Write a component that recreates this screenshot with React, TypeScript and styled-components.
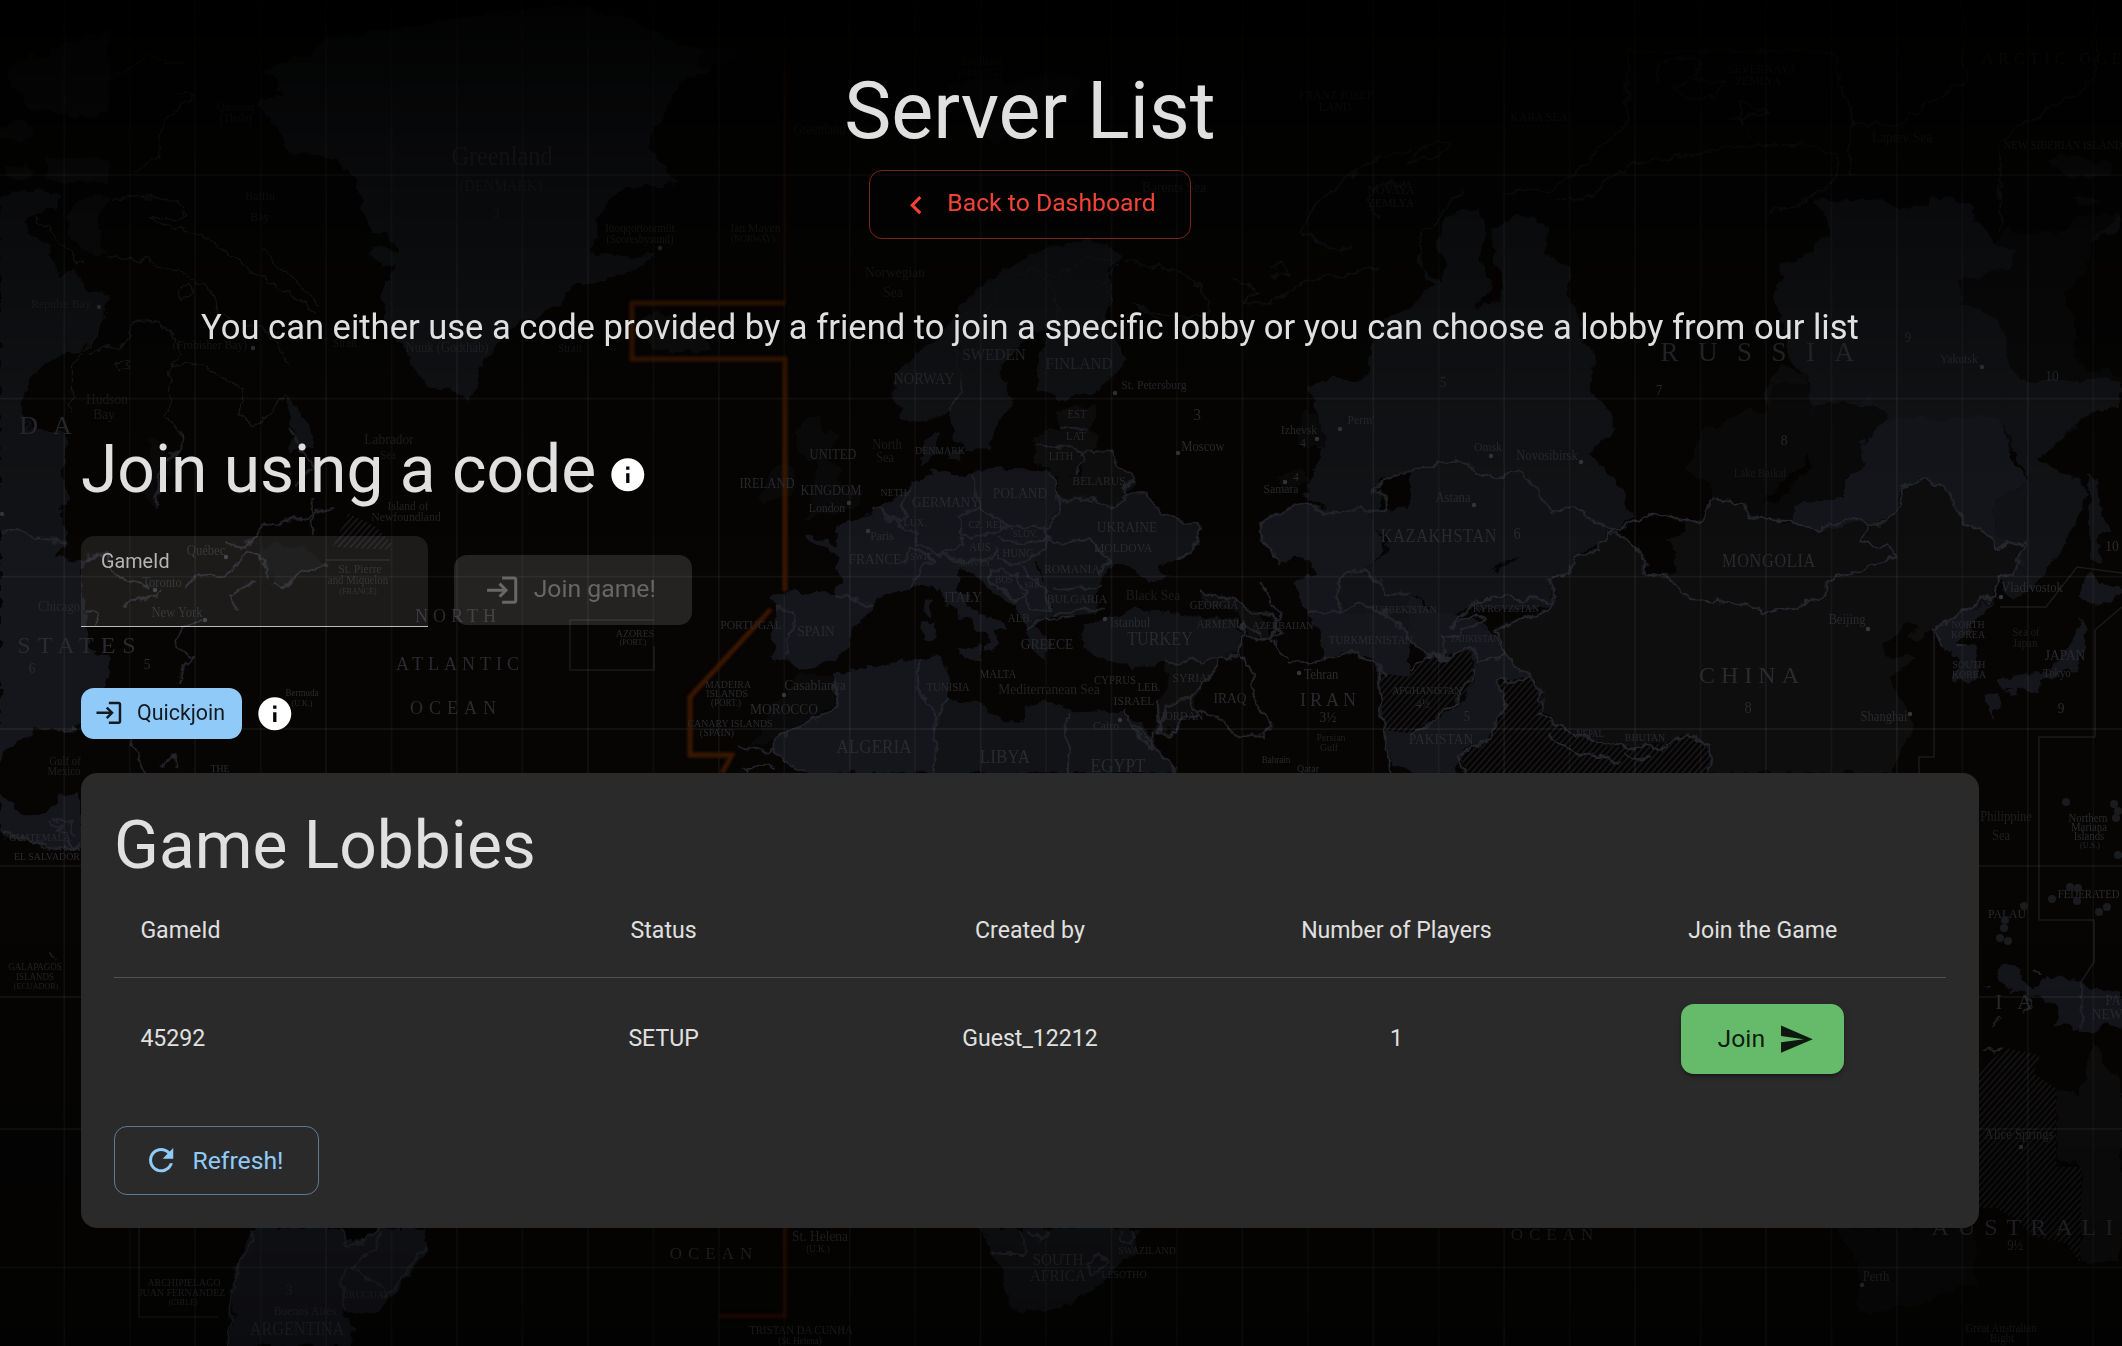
import React from "react";
import styled, { createGlobalStyle, css } from "styled-components";

const GlobalStyle = createGlobalStyle`
  *, *::before, *::after { box-sizing: border-box; }
  html, body { margin: 0; padding: 0; background: #050403; }
  body { font-family: Roboto, "Liberation Sans", sans-serif; color: #e0e0e0; overflow: hidden; }
`;

/* ---------- World map backdrop ---------- */

type Tone = "plum" | "slate" | "ash" | "coal" | "sea";
type Shape = [Tone, string];
interface Sheet {
  matrix: string;
  land: Shape[];
  hatched?: string[];
  borders?: string[];
}

const tones: Record<Tone, string> = {
  plum: "#15161c",
  slate: "#121316",
  ash: "#0e0e0f",
  coal: "#0a0a0a",
  sea: "#050403",
};

const sheets: Sheet[] = [
  {
    // Greenland, Canadian archipelago
    matrix: "matrix(.45281 0 0 .33333 0 0)",
    land: [
      ["slate", "M580 215L640 180L700 150L720 110L830 95L900 80L1000 60L1130 25L1260 20L1360 45L1440 90L1500 130L1568 160L1568 210L1500 250L1480 310L1445 380L1440 450L1470 510L1500 540L1460 565L1395 555L1345 590L1322 660L1312 760L1380 770L1450 768L1370 830L1265 860L1235 910L1190 950L1120 990L1085 1060L1060 1100L1055 1160L1030 1200L990 1170L940 1160L905 1090L880 1020L850 940L840 880L860 820L890 760L860 710L810 680L805 610L780 540L745 485L700 462L640 458L610 390L570 310L620 280L615 240Z"],
      ["slate", "M818 760L850 735L895 760L875 795L840 805Z"],
      ["ash", "M0 380L40 370L80 390L60 420L0 410ZM10 500L60 490L75 530L40 550L10 535ZM100 480L180 470L240 480L240 545L160 550L100 530ZM110 150L170 120L240 95L240 330L200 350L140 350L60 310L20 260L20 200L60 165L110 180Z"],
      ["slate", "M0 590L60 570L135 580L120 630L70 645L60 690L110 740L130 830L170 800L190 870L240 880L235 940L210 1000L175 1050L110 1080L70 1130L50 1200L60 1280L100 1310L140 1350L0 1350Z"],
      ["ash", "M150 640L190 590L240 585L215 660L225 740L240 770L190 755L155 710Z"],
      ["slate", "M630 1180L660 1230L690 1300L695 1350L640 1350L650 1300Z"],
      ["ash", "M1415 960L1450 935L1500 960L1568 950L1568 1050L1500 1060L1440 1040Z"],
    ],
    borders: [
      "M245 600L330 590L400 610L410 650L330 650L380 680L450 700L500 760L570 830L640 880L700 940",
      "M240 770L330 780L430 840L480 900L480 950L560 970L610 1020L635 1100M200 1050L270 1040L300 960L370 980L400 1060L370 1120L380 1200L360 1250L400 1300L400 1350",
      "M380 1100L440 1090L500 1140L540 1170L530 1240L560 1280L610 1230L630 1180",
      "M160 1240L160 1090L240 940M75 650L190 800M575 740L710 920",
      "M240 240L330 170L400 190M380 290L430 280L360 370L350 470L300 510",
      "M390 870L420 850L425 885L400 895ZM260 1090L290 1080L285 1105L265 1110Z",
    ],
  },
  {
    // Scandinavia and western Russia
    matrix: "matrix(.45281 0 0 .33333 700 0)",
    land: [
      ["slate", "M430 1120L500 1040L560 960L600 880L650 830L700 780L780 740L860 715L930 760L900 810L910 880L890 950L920 1020L940 1080L880 1170L790 1200L745 1170L745 1060L790 1000L740 990L700 1050L665 1110L690 1200L650 1280L640 1340L600 1350L560 1320L550 1240L500 1270L450 1260L430 1190Z"],
      ["slate", "M1568 920L1520 950L1480 1040L1475 1130L1410 1150L1335 1165L1370 1215L1360 1350L1568 1350Z"],
      ["coal", "M540 260L620 230L700 250L780 210L850 240L810 310L740 330L690 400L650 440L620 360L560 320Z"],
      ["coal", "M0 130L100 150L50 190L0 200Z"],
    ],
    borders: [
      "M930 780L1040 810L1110 860L1130 930L1080 960L1000 940L950 910L1010 960M1180 840L1230 870L1200 910L1280 900L1340 840L1440 820L1500 800",
      "M1568 450L1480 480L1420 540L1350 620L1330 700L1370 735L1440 740M1260 800L1290 790L1300 820L1270 830Z",
      "M550 1240L575 1150L565 1040L640 920L660 840L740 810L780 870L790 950L820 1000M740 810L800 830L850 770L920 790L885 850L910 900L885 960L940 1080",
      "M1568 560L1500 550L1470 600L1500 650",
    ],
  },
  {
    // Siberia
    matrix: "matrix(.45407 0 0 .33333 1410 0)",
    land: [
      ["slate", "M0 920L50 860L20 810L70 840L80 780L50 720L90 640L150 620L165 680L155 780L180 850L140 930L200 900L210 830L185 780L180 690L240 640L310 680L300 760L355 810L345 880L370 930L380 1030L410 1060L400 1130L395 1180L440 1230L450 1290L400 1350L0 1350Z"],
      ["slate", "M890 600L1040 600L1060 625L1140 620L1150 590L1230 610L1250 660L1290 730L1320 690L1440 700L1470 650L1568 640L1568 680L1500 730L1490 820L1440 880L1465 960L1460 1070L1490 1110L1568 1120L1568 1225L1510 1225L1470 1270L1410 1350L990 1350L990 1300L1050 1250L1010 1190L970 1190L880 1230L870 1180L890 1150L840 1090L820 960L800 900L820 830L810 790L870 770L890 730L930 710L910 640Z"],
      ["coal", "M1210 850L1320 800L1330 760L1290 735L1320 690L1440 700L1470 650L1568 640L1500 730L1490 820L1440 880L1465 960L1460 1070L1490 1110L1568 1120L1568 1225L1510 1225L1410 1350L1300 1350L1300 1230L1340 1140L1320 1090L1310 990L1260 930L1210 910Z"],
      ["ash", "M1410 490L1430 460L1500 480L1550 490L1540 530L1450 535ZM1460 600L1500 585L1525 610L1480 615Z"],
      ["ash", "M640 1350L650 1290L690 1280L740 1230L790 1240L780 1170L820 1100L880 1130L870 1200L890 1230L980 1190L1020 1200L1040 1260L1000 1290L1000 1350Z"],
      ["coal", "M130 1270L230 1230L250 1170L395 1175L440 1230L450 1290L400 1350L150 1350Z"],
    ],
    borders: [
      "M320 600L400 590L440 530L500 490L600 470L720 440L860 430L940 470L945 530L890 590L790 640M480 370L310 575L210 575M480 370L480 155L930 150L970 370L970 520",
      "M550 250L540 200L600 170L640 190L630 240L580 260L620 300L680 290L690 250L630 240M700 360L790 340L720 300L750 420",
      "M1220 0L1220 240L1075 370L970 370M1508 0L1508 240L1300 420L1300 700M0 480L60 420L90 440L40 480ZM115 570L20 720L20 810",
    ],
  },
  {
    // Europe, North Africa, Middle East
    matrix: "matrix(.45281 0 0 .33333 700 380)",
    land: [
      ["slate", "M430 0L430 70L450 120L500 130L550 90L560 160L590 210L640 200L650 140L695 65L665 0Z"],
      ["slate", "M740 0L745 30L790 60L870 40L900 0Z"],
      ["slate", "M490 180L530 150L530 220L490 250ZM540 215L580 205L570 245Z"],
      ["ash", "M785 90L875 80L865 150L880 200L840 240L830 280L790 290L740 240L735 170L765 150L800 150Z"],
      ["coal", "M225 130L265 100L270 150L300 160L280 230L310 270L310 310L360 340L350 380L290 400L225 420L250 380L235 340L265 290L260 250L215 220L210 170Z"],
      ["coal", "M130 350L150 280L190 250L215 290L200 350L140 370Z"],
      ["plum", "M240 470L300 490L300 440L380 400L450 330L470 310L510 290L510 260L560 290L600 280L620 270L700 260L780 280L790 360L795 400L770 480L740 560L775 640L770 690L740 730L720 750L700 680L650 640L610 590L570 560L570 620L620 700L680 740L650 750L660 790L630 820L640 770L600 730L550 680L520 620L460 620L400 650L390 680L350 720L330 790L300 840L240 860L220 870L190 840L155 830L170 700L155 650L180 635L300 645L310 600L300 530L280 500L240 490Z"],
      ["slate", "M790 360L850 360L920 370L960 340L990 350L1000 390L1050 420L1105 440L1100 490L1060 540L1010 560L1030 590L990 600L960 565L910 555L885 590L880 640L860 700L830 710L780 705L740 740L770 790L760 850L740 820L715 750L740 720L775 680L760 600L740 540L770 480Z"],
      ["ash", "M790 290L840 280L850 220L910 215L930 260L965 310L940 340L920 375L790 360Z"],
      ["plum", "M575 810L625 800L620 850L580 830ZM495 660L515 655L510 710L498 700ZM485 730L518 725L515 775L490 780Z"],
      ["slate", "M850 730L900 720L960 685L1040 700L1110 715L1190 710L1190 820L1120 840L1060 850L1000 860L960 865L920 850L870 830L840 770Z"],
      ["ash", "M1100 640L1180 660L1240 700L1260 770L1210 770L1190 700L1130 680Z"],
      ["coal", "M220 880L290 900L300 970L250 1010L160 1080L105 1105L140 1040L150 980L190 940Z"],
      ["plum", "M165 1080L250 1010L305 980L290 890L390 855L440 840L540 835L545 900L550 960L520 1040L520 1180L235 1180L165 1125Z"],
      ["slate", "M550 960L620 970L640 1000L710 1035L715 980L760 960L830 990L930 1000L980 1030L1000 1080L1050 1180L520 1180L520 1040Z"],
      ["plum", "M1235 430L1250 410L1330 370L1380 390L1480 390L1510 500L1480 560L1410 590L1410 700L1500 690L1568 760L1568 1180L1530 1150L1510 1050L1500 880L1480 830L1420 810L1375 840L1365 760L1340 700L1310 610L1360 580L1350 540L1320 530L1280 550L1235 480Z"],
      ["slate", "M1470 390L1568 380L1568 770L1510 700L1410 700L1410 590L1480 560L1520 500Z"],
      ["slate", "M1335 20L1400 0L1568 0L1568 280L1500 300L1500 390L1400 400L1330 350L1370 230L1360 60Z"],
      ["ash", "M1030 850L1140 840L1130 900L1090 950L1100 990L1060 1030L1020 1060L1005 1050L1015 960L1030 910Z"],
      ["coal", "M1265 290L1330 265L1345 300L1300 335ZM1325 110L1360 100L1380 200L1340 210L1318 180Z"],
    ],
    hatched: ["M1500 880L1568 890L1568 1060L1510 1050Z"],
    borders: [
      "M550 100L575 30L575 0M605 285L610 340L620 385L565 410L580 450L600 470L650 455L690 430L620 390M690 440L760 445L770 480L700 490L660 470M780 280L790 360L795 400L765 450M790 360L850 360L920 375L950 340M740 200L820 205L850 220L830 280M800 140L860 150M845 220L910 215L930 260L960 300L940 320L940 345",
      "M950 340L990 345L1000 390L1050 415L1105 440L1100 490L1060 540",
      "M380 385L410 400L440 430L455 400L450 360L465 320M400 400L440 440L485 455L475 500L530 520L580 500L580 460M450 550L460 510L490 520L520 540L490 560L470 590L465 620M530 520L570 540L640 540L650 500M650 500L660 540L700 555L740 530L765 490L860 480L900 540L880 580M640 560L640 600L700 670L720 640L700 590ZM705 560L740 600L765 640L770 690L730 680L710 640M775 625L830 630L890 620M780 705L850 690L890 690M720 750L760 720L830 710",
      "M300 645L345 660L390 680M165 690L205 690L200 740L190 820M490 835L480 930L515 990L520 1040L520 1180M550 960L525 1010M815 1000L810 1180M165 1080L305 980L300 900M165 1080L165 1125L235 1180M80 1110L165 1110M100 1180L100 1160L165 1160",
      "M1190 820L1200 720L1240 770M1105 640L1180 660L1220 700L1260 700L1280 760L1230 780L1200 760M1190 820L1220 880L1220 950L1260 1040L1240 1070L1190 1065L1130 1010L1085 980L1080 950L1030 980L1010 1060L1040 1060L1065 1020L1100 1000M1030 850L1190 830M1145 840L1125 900L1080 950",
      "M1235 430L1330 370L1385 400L1430 390L1510 395L1520 360L1490 340L1520 290L1568 275M1235 430L1240 480L1280 550M1410 590L1410 700L1340 690M1410 590L1465 570L1520 640L1568 640M1410 700L1460 670L1510 700L1568 770M1375 840L1440 810L1500 860L1520 890M1500 860L1510 1050L1530 1180M1300 850L1350 850L1380 830M1240 600L1250 650L1280 700L1260 780L1300 840",
      "M930 990L990 1100L1005 1050M960 1030L1050 1180M1010 960L1015 1060",
    ],
  },
  {
    // Central and East Asia
    matrix: "matrix(.45407 0 0 .33333 1410 380)",
    land: [
      ["slate", "M0 0L395 0L400 40L440 90L450 150L395 215L440 280L470 350L495 410L450 450L410 500L360 520L350 580L310 590L320 680L200 690L130 680L80 720L0 640Z"],
      ["plum", "M880 90L1300 100L1320 230L1360 300L1290 360L1290 480L1350 490L1350 560L1290 590L1300 660L1270 600L1350 500L1290 500L1220 430L1170 310L1120 300L1080 330L1060 420L1010 430L900 450L840 430L850 380L960 350L960 300L1000 260L990 180L1050 120L1010 45L940 95Z"],
      ["slate", "M880 0L1310 0L1300 110L1050 120L1010 45L940 95L880 90Z"],
      ["slate", "M1300 110L1360 300L1290 360L1290 480L1350 490L1350 560L1290 590L1330 660L1390 600L1450 480L1490 340L1470 290L1380 245L1500 90L1568 85L1568 0L1310 0Z"],
      ["coal", "M610 270L640 160L680 135L740 90L790 100L800 0L880 20L880 90L960 60L1050 100L1020 180L990 190L1000 260L960 300L960 350L850 380L840 430L800 410L760 415L730 375L670 350L660 310Z"],
      ["ash", "M455 450L550 400L640 430L670 350L730 375L760 415L840 430L900 450L1000 430L1060 420L1090 320L1140 300L1180 320L1220 430L1270 460L1290 500L1350 490L1330 580L1290 590L1280 660L1210 700L1155 750L1100 785L1115 740L1085 730L1070 780L1030 790L1050 830L1120 830L1060 890L1080 960L1110 1040L1070 1150L1060 1180L660 1180L650 1100L600 1070L470 1110L380 1110L290 990L280 900L200 820L190 740L310 680L310 590L350 580L370 520L410 510L440 450Z"],
      ["sea", "M455 455L550 400L605 430L605 455L565 470L590 520L575 585L515 580L510 510Z"],
      ["sea", "M875 220L880 260L850 310L810 360L775 370L830 300L860 260ZM185 570L200 540L240 535L210 550L190 580Z"],
      ["plum", "M1155 750L1210 700L1280 660L1260 710L1200 790L1240 800L1260 870L1250 900L1200 910L1205 830L1170 800Z"],
      ["plum", "M1495 575L1530 620L1560 620L1568 640L1520 685L1465 650ZM1475 710L1495 750L1480 810L1465 870L1395 900L1380 940L1300 920L1290 900L1340 880L1390 880L1440 830L1460 780ZM1265 950L1300 945L1300 990L1280 1010ZM1315 930L1345 925L1340 950L1315 955Z"],
      ["slate", "M1490 280L1515 290L1520 400L1545 460L1515 470L1525 550L1500 550L1500 400Z"],
      ["plum", "M0 640L40 690L110 710L150 720L180 760L200 780L210 830L270 890L190 910L210 970L170 1080L120 1110L100 1180L0 1180L0 1060L50 1020L130 950L140 840L80 830L40 830L0 780Z"],
      ["plum", "M475 1110L510 1095L540 1115L530 1135L490 1135ZM470 1145L495 1150L495 1180L475 1180Z"],
    ],
    hatched: [
      "M0 870L40 830L135 810L140 910L80 990L0 1060Z",
      "M190 905L270 890L290 960L290 1000L340 1050L440 1100L480 1100L560 1090L610 1060L660 1110L660 1180L130 1180L105 1130L170 1080L210 970Z",
    ],
    borders: [
      "M0 272L100 235L130 240L140 275L190 300L240 270L280 340L310 395L370 390L410 430L450 450L550 400L640 430L660 365L670 350L730 375L750 415L840 420L890 450L960 415L1010 430L990 490L1050 495L1070 535L1010 555L970 590L920 600L915 640L880 665L785 695L720 670L620 660L570 590L515 580L510 510L455 455",
      "M1010 430L1050 430L1085 350L1080 320L1135 300L1180 320L1220 430L1270 460L1290 500L1355 485L1330 580L1290 590L1290 640L1210 700L1155 750L1170 800M1205 800L1230 795",
      "M450 455L415 490L410 520L365 520L350 580L310 595L320 650L305 690L190 750L210 830L265 885L290 940L285 1000L340 1050L400 1080L470 1105L510 1095L545 1115L580 1080L615 1065L655 1100L665 1140L655 1180",
      "M130 690L140 660L180 660L190 650L290 660L310 680M130 690L90 740L150 700L170 720L130 740L100 770L70 760L80 830L40 830L0 780M0 870L40 830L80 835L130 800L150 840L210 830M190 905L250 905L265 885M190 905L210 970L170 1080L105 1130L125 1180M0 1060L40 1040L60 1000L100 970L140 870M310 1050L310 1080L380 1120L460 1145M470 1120L490 1135L530 1135",
    ],
  },
  {
    // Eastern North America
    matrix: "matrix(.45281 0 0 .33333 0 430)",
    land: [
      ["slate", "M0 0L140 0L150 90L135 120L150 210L130 260L150 300L150 340L60 320L0 305Z"],
      ["plum", "M0 305L40 300L80 330L150 340L120 380L180 390L190 580L200 660L240 690L230 770L190 860L160 900L80 900L40 940L10 970L0 1000Z"],
      ["coal", "M570 360L600 340L700 370L710 410L660 430L620 480L600 460L610 430L590 440Z"],
      ["coal", "M325 20L370 40L380 130L340 230L310 180L330 130Z"],
    ],
    hatched: ["M735 350L770 250L830 290L865 340L865 360Z"],
    borders: [
      "M0 305L40 300L80 325L150 340M410 470L430 440L500 438L545 360L575 370L590 440M180 390L230 370L250 440L290 450L330 470M270 540L290 510L350 500L360 480M500 340L540 350L590 280L660 270L740 230",
      "M530 540L510 500L560 450M450 570L400 590L390 640L420 680L400 730L395 760M190 550L215 550L210 580M400 0L400 50L360 110L340 230M690 200L690 310M640 0L690 110L650 170M290 930L310 1000L325 1040M360 1000L380 980L390 1020M145 900L165 900M600 460L620 480L660 430L720 410",
    ],
  },
  {
    // Gulf of Mexico and the Pacific coast
    matrix: "matrix(.33333 0 0 .33333 0 720)",
    land: [
      ["plum", "M0 0L200 0L215 30L110 30L60 50L20 90L0 130Z"],
      ["plum", "M0 200L30 250L70 290L140 280L180 230L243 215L243 390L180 390L130 370L0 350Z"],
    ],
    borders: [
      "M165 300L215 300L215 345M150 310L180 320L170 340L200 350M190 390L243 370M200 370L240 390M0 340L60 350L130 370L180 390L240 380M150 700L165 715",
    ],
  },
  {
    // Australia and New Guinea
    matrix: "matrix(.33333 0 0 .33333 1960 740)",
    land: [
      ["plum", "M105 690L150 675L185 685L190 725L215 745L280 705L330 715L370 735L486 765L486 860L430 850L410 880L360 880L320 850L275 860L300 830L290 790L250 775L205 765L150 750L145 730L120 715ZM60 735L95 745L90 755Z"],
      ["ash", "M290 1050L350 1075L375 1020L385 940L402 905L430 950L440 990L486 1000L486 1568L360 1568L360 1280L290 1260Z"],
      ["coal", "M0 1265L45 1265L45 1405L0 1420Z"],
    ],
    hatched: ["M55 990L140 925L240 945L220 1000L288 1045L288 1280L365 1280L360 1568L320 1510L220 1490L170 1440L110 1405L45 1405L45 1265Z"],
    borders: ["M200 770L215 800L190 820M120 830L95 855M215 685L240 705M80 930L130 925M362 725L362 870"],
  },
  {
    // Southern Ocean rim
    matrix: "matrix(.76531 0 0 .33333 0 1180)",
    land: [
      ["plum", "M328 145L557 145L555 220L530 300L500 380L480 405L445 390L465 450L455 498L298 498L305 380L305 280L320 200Z"],
      ["slate", "M1282 145L1490 145L1480 220L1440 310L1400 375L1340 400L1318 370L1310 270L1295 210Z"],
      ["sea", "M445 145L495 145L480 185L450 190Z"],
    ],
    borders: [
      "M445 145L450 188L478 188L497 145M495 160L490 200L460 260L500 325M455 265L445 310L450 390M330 145L330 180L310 260L300 400L298 498M555 200L525 300L500 350",
      "M1345 150L1360 175L1372 150M1338 145L1338 225L1310 225L1298 205M1420 250L1435 222L1447 245L1430 285ZM1465 150L1463 175L1475 190L1485 170L1480 148",
    ],
  },
  {
    // Western Australia
    matrix: "matrix(.39668 0 0 .33333 1500 860)",
    land: [
      ["coal", "M845 1105L1200 1105L1200 1275L1110 1300L1080 1335L1000 1340L950 1370L900 1355L890 1335L910 1300L905 1240L885 1180Z"],
    ],
  },
];

/* Straight maritime boundaries, in page pixels */
const boundaries =
  "M570 620H654M570 620V670H654V646M326 560H390M139 1228V1317H218M1934 630V757H1919V773M2095 737V630L2122 607M2095 737H2039V920H2094V962L2081 982M2000 607H2046L2077 567L2122 573";

type Label = [string, number, number, number, number?, number?];
// text, centre x, baseline y, size, letter spacing, opacity
const labels: Label[] = [
  ["Greenland", 502, 165, 27, 0, 0.8], ["(DENMARK)", 501, 191, 16, 0, 0.6], ["3", 496, 218, 15, 0, 0.6],
  ["Qaanaaq", 236, 111, 12, 0, 0.5], ["(Thule)", 236, 122, 12, 0, 0.5],
  ["Baffin", 260, 200, 13, 0, 0.5], ["Bay", 260, 221, 13, 0, 0.5],
  ["Ittoqqortoormiit", 640, 232, 12, 0, 0.7], ["(Scoresbysund)", 640, 243, 12, 0, 0.7],
  ["Repulse Bay", 61, 308, 13, 0, 0.7], ["(Frobisher Bay)", 210, 349, 13, 0, 0.6], ["Nuuk (Godthåb)", 447, 352, 14, 0, 0.8],
  ["Strait", 345, 347, 12, 0, 0.5], ["Strait", 570, 352, 12, 0, 0.5],
  ["Hudson", 107, 404, 15, 0, 0.6], ["Bay", 104, 419, 15, 0, 0.6], ["DA", 53, 434, 26, 15, 1],
  ["Labrador", 389, 444, 15, 0, 0.7], ["Sea", 388, 459, 12, 0, 0.5],
  ["Svalbard", 982, 65, 13, 0, 0.5], ["(NORWAY)", 980, 76, 10, 0, 0.5], ["Greenland Sea", 830, 134, 14, 0, 0.5],
  ["Jan Mayen", 755, 232, 13, 0, 0.6], ["(NORWAY)", 753, 242, 10, 0, 0.6],
  ["Norwegian", 895, 277, 15, 0, 0.6], ["Sea", 893, 297, 15, 0, 0.6], ["Barents Sea", 1174, 192, 15, 0, 0.6],
  ["FRANZ JOSEF", 1336, 99, 13, 0, 0.6], ["LAND", 1335, 111, 13, 0, 0.6], ["NOVAYA", 1391, 194, 13, 0, 0.6], ["ZEMLYA", 1391, 207, 13, 0, 0.6],
  ["KARA SEA", 1539, 121, 13, 0, 0.6], ["SEVERNAYA", 1762, 73, 13, 0, 0.6], ["ZEMLYA", 1758, 85, 13, 0, 0.6],
  ["Laptev Sea", 1902, 142, 15, 0, 0.6], ["ARCTIC OCE", 2054, 64, 16, 5, 0.7], ["NEW SIBERIAN ISLANDS", 2066, 149, 12, 0, 0.8],
  ["SWEDEN", 994, 360, 17], ["FINLAND", 1079, 369, 17], ["NORWAY", 924, 384, 16], ["St. Petersburg", 1154, 389, 13],
  ["3", 1197, 420, 17], ["EST", 1077, 418, 12], ["LAT", 1076, 440, 12], ["LITH", 1061, 460, 12], ["Moscow", 1203, 451, 14],
  ["RUSSIA", 1767, 361, 27, 19.5, 1], ["9", 1908, 342, 14], ["7", 1659, 395, 15], ["5", 1443, 387, 15], ["8", 1784, 445, 15], ["10", 2052, 381, 15],
  ["Yakutsk", 1959, 363, 13], ["Izhevsk", 1299, 434, 13], ["4", 1303, 447, 13], ["Perm'", 1361, 424, 13],
  ["North", 887, 449, 14, 0, 0.6], ["Sea", 885, 462, 14, 0, 0.6], ["DENMARK", 940, 454, 11], ["UNITED", 833, 459, 14], ["KINGDOM", 831, 495, 14],
  ["London", 827, 512, 13], ["IRELAND", 767, 488, 14], ["NETH.", 895, 496, 11], ["POLAND", 1020, 498, 15], ["GERMANY", 946, 507, 15], ["BELARUS", 1099, 485, 13],
  ["LUX.", 915, 526, 11], ["CZ. REP.", 987, 528, 11], ["SLOV.", 1025, 537, 10], ["UKRAINE", 1127, 532, 15], ["MOLDOVA", 1123, 552, 13], ["Paris", 882, 540, 13],
  ["FRANCE", 875, 564, 15], ["SWIT.", 922, 560, 10], ["AUS", 980, 551, 12], ["HUNG", 1018, 557, 12], ["SLOVEN.", 975, 566, 9], ["ROMANIA", 1072, 573, 13],
  ["BOS", 1004, 583, 10], ["SRB.", 1033, 588, 9], ["ITALY", 963, 602, 15], ["BULGARIA", 1077, 603, 13], ["ALB.", 1020, 622, 12], ["GREECE", 1047, 649, 15],
  ["PORTUGAL", 751, 629, 13], ["SPAIN", 816, 636, 15], ["Black Sea", 1153, 600, 15, 0, 0.6], ["Istanbul", 1130, 627, 14], ["TURKEY", 1160, 645, 18],
  ["GEORGIA", 1214, 609, 12], ["ARMENIA", 1222, 628, 12], ["AZERBAIJAN", 1283, 629, 11], ["TURKMENISTAN", 1371, 644, 12],
  ["MALTA", 998, 678, 12], ["Mediterranean Sea", 1049, 694, 15, 0, 0.8], ["CYPRUS", 1115, 684, 12], ["LEB.", 1149, 691, 12], ["SYRIA", 1190, 682, 13], ["ISRAEL", 1134, 705, 13],
  ["TUNISIA", 948, 691, 12], ["Casablanca", 815, 690, 15], ["MADEIRA", 728, 688, 11], ["ISLANDS", 727, 697, 11], ["(PORT.)", 726, 706, 10], ["MOROCCO", 784, 714, 15],
  ["CANARY ISLANDS", 730, 727, 11], ["(SPAIN)", 717, 736, 11], ["ALGERIA", 874, 753, 19], ["LIBYA", 1005, 763, 19], ["EGYPT", 1118, 772, 19], ["Cairo", 1106, 730, 13],
  ["JORDAN", 1182, 720, 12], ["IRAQ", 1230, 703, 15], ["IRAN", 1330, 706, 18, 4], ["3½", 1328, 722, 15], ["Tehran", 1321, 679, 14],
  ["Samara", 1281, 493, 13], ["4", 1296, 481, 13], ["KAZAKHSTAN", 1439, 542, 18, 0.8], ["6", 1517, 539, 16], ["Astana", 1453, 502, 14], ["Omsk", 1488, 451, 13], ["Novosibirsk", 1547, 460, 14],
  ["Lake Baikal", 1760, 477, 12, 0, 0.5], ["MONGOLIA", 1769, 567, 18, 0.8], ["CHINA", 1752, 683, 24, 6], ["8", 1748, 713, 16], ["Beijing", 1847, 624, 14], ["Shanghai", 1884, 721, 14],
  ["Vladivostok", 2032, 592, 14], ["KYRGYZSTAN", 1506, 612, 11], ["UZBEKISTAN", 1406, 613, 11], ["TAJIKISTAN", 1475, 642, 10], ["AFGHANISTAN", 1427, 694, 11], ["4½", 1423, 708, 12], ["5", 1467, 721, 14],
  ["PAKISTAN", 1441, 744, 15], ["NEPAL", 1590, 737, 10], ["BHUTAN", 1645, 741, 11], ["NORTH", 1968, 628, 11], ["KOREA", 1968, 638, 11], ["SOUTH", 1969, 668, 11], ["KOREA", 1969, 678, 11],
  ["Sea of", 2026, 636, 12, 0, 0.6], ["Japan", 2025, 647, 12, 0, 0.6], ["JAPAN", 2065, 660, 15], ["Tokyo", 2057, 677, 12], ["10", 2112, 551, 15], ["9", 2061, 713, 15],
  ["Bahrain", 1276, 763, 10], ["Persian", 1331, 741, 11, 0, 0.7], ["Gulf", 1329, 751, 11, 0, 0.7], ["Qatar", 1308, 772, 11],
  ["Island of", 408, 510, 13, 0, 0.8], ["Newfoundland", 406, 521, 13, 0, 0.8], ["Québec", 206, 555, 14, 0, 0.9], ["Toronto", 162, 587, 14, 0, 0.9], ["New York", 177, 617, 14, 0, 0.9], ["St. Pierre", 360, 573, 13, 0, 0.8], ["and Miquelon", 358, 584, 12, 0, 0.8], ["(FRANCE)", 358, 594, 9, 0, 0.8],
  ["Chicago", 59, 611, 14, 0, 0.9], ["STATES", 80, 653, 24, 7, 1], ["6", 32, 673, 15], ["5", 147, 669, 15], ["NORTH", 458, 622, 18, 5, 1], ["ATLANTIC", 460, 670, 18, 5, 1], ["OCEAN", 456, 714, 18, 6, 1],
  ["AZORES", 635, 637, 11], ["(PORT.)", 633, 645, 9], ["Bermuda", 302, 696, 10], ["(U.K.)", 302, 706, 9], ["Gulf of", 65, 765, 12, 0, 0.7], ["Mexico", 64, 775, 12, 0, 0.7], ["THE", 220, 772, 11],
  ["GUATEMALA", 40, 841, 11], ["EL SALVADOR", 47, 860, 11], ["GALAPAGOS", 35, 970, 10, 0, 0.8], ["ISLANDS", 35, 980, 10, 0, 0.8], ["(ECUADOR)", 36, 989, 9, 0, 0.8],
  ["Philippine", 2006, 821, 14, 0, 0.7], ["Sea", 2001, 840, 14, 0, 0.7], ["Northern", 2088, 822, 12], ["Mariana", 2089, 831, 12], ["Islands", 2089, 840, 12], ["(U.S.)", 2090, 848, 9],
  ["FEDERATED S", 2093, 898, 12], ["PALAU", 2007, 918, 13], ["SIA", 2008, 1009, 21, 15], ["PA", 2113, 1005, 14], ["NEW", 2107, 1019, 15],
  ["Alice Springs", 2019, 1139, 14], ["AUSTRALIA", 2040, 1235, 24, 9, 1], ["9½", 2015, 1250, 14], ["Perth", 1876, 1281, 14], ["Great Australian", 2001, 1332, 12, 0, 0.8], ["Bight", 2002, 1342, 12, 0, 0.8],
  ["OCEAN", 1555, 1240, 17, 6, 0.8], ["OCEAN", 714, 1259, 17, 6, 1], ["St. Helena", 820, 1241, 15], ["(U.K.)", 818, 1252, 10], ["SOUTH", 1058, 1265, 17], ["AFRICA", 1058, 1281, 17], ["SWAZILAND", 1147, 1254, 11], ["LESOTHO", 1124, 1278, 11],
  ["ARCHIPIELAGO", 184, 1286, 11], ["JUAN FERNANDEZ", 182, 1296, 11], ["(CHILE)", 183, 1305, 9], ["3", 289, 1295, 15], ["URUGUAY", 366, 1298, 11], ["Buenos Aires", 305, 1315, 13], ["ARGENTINA", 297, 1335, 18],
  ["TRISTAN DA CUNHA", 801, 1334, 12], ["(St. Helena)", 800, 1344, 10],
];

const cities: [number, number][] = [
  [99, 307], [253, 348], [660, 248], [1115, 393], [1178, 453], [1317, 439], [1340, 429], [1285, 482], [849, 503], [868, 531], [1105, 619],
  [784, 695], [1120, 720], [1299, 673], [1491, 456], [1581, 462], [1474, 505], [1868, 629], [2001, 597], [1910, 714], [1982, 367],
  [226, 557], [155, 590], [205, 620], [2021, 1147], [1862, 1285], [2, 514],
];

const atolls: [number, number][] = [
  [2024, 906], [2005, 920], [2004, 928], [2000, 938], [2008, 941], [2066, 802], [2114, 804], [2118, 811], [2116, 818], [2118, 855],
  [2070, 887], [2078, 888], [2052, 899], [2077, 901], [2107, 907], [2099, 912],
];

const meridians = Array.from({ length: 33 }, (_, i) => 64.3 + (i - 1) * 65.45);
const parallels = [175, 398.7, 576.7, 729, 866, 997, 1129, 1267.5];

const Backdrop = styled.svg`
  position: fixed;
  inset: 0;
  width: 2122px;
  height: 1346px;
  z-index: 0;
  pointer-events: none;
`;

const MapLabel = styled.text`
  font-family: "Liberation Serif", serif;
  fill: #2a2b2f;
  text-anchor: middle;
`;

const WorldMap = () => (
  <Backdrop viewBox="0 0 2122 1346" aria-hidden="true">
    <defs>
      <pattern id="hatch" width="4.6" height="4.6" patternUnits="userSpaceOnUse" patternTransform="rotate(42)">
        <rect width="4.6" height="4.6" fill="#050403" />
        <rect width="1.7" height="4.6" fill="#17171a" />
      </pattern>
      <filter id="coast" x="0" y="0" width="2122" height="1346" filterUnits="userSpaceOnUse" colorInterpolationFilters="sRGB">
        <feTurbulence type="fractalNoise" baseFrequency="0.07" numOctaves="3" seed="4" result="noise" />
        <feDisplacementMap in="SourceGraphic" in2="noise" scale="13" xChannelSelector="R" yChannelSelector="G" />
        <feGaussianBlur stdDeviation="0.5" />
      </filter>
      <filter id="glow" x="-10%" y="-10%" width="120%" height="120%">
        <feGaussianBlur stdDeviation="1.5" />
      </filter>
      <filter id="soft" colorInterpolationFilters="sRGB">
        <feGaussianBlur stdDeviation="0.5" />
      </filter>
      <linearGradient id="shade" x1="0" y1="0" x2="0" y2="1">
        <stop offset="0" stopColor="#000" stopOpacity="0.88" />
        <stop offset="0.12" stopColor="#000" stopOpacity="0.52" />
        <stop offset="0.3" stopColor="#000" stopOpacity="0.1" />
        <stop offset="0.4" stopColor="#000" stopOpacity="0" />
        <stop offset="0.7" stopColor="#000" stopOpacity="0" />
        <stop offset="1" stopColor="#000" stopOpacity="0.42" />
      </linearGradient>
    </defs>
    <rect width="2122" height="1346" fill="#060504" />
    {sheets.map((sheet, i) => (
      <clipPath key={i} id={`hatched-${i}`}>
        {sheet.hatched?.map((d, j) => <path key={j} d={d} transform={sheet.matrix} />)}
      </clipPath>
    ))}
    <g filter="url(#coast)">
      {sheets.map((sheet, i) => (
        <g key={i} transform={sheet.matrix}>
          {sheet.land.map(([tone, d], j) => (
            <path key={j} d={d} fill={tones[tone]} />
          ))}
        </g>
      ))}
    </g>
    <g filter="url(#soft)">
      {sheets.map((_, i) => (
        <rect key={i} width="2122" height="1346" fill="url(#hatch)" clipPath={`url(#hatched-${i})`} />
      ))}
    </g>
    <g filter="url(#coast)">
      {sheets.map((sheet, i) => (
        <g
          key={i}
          transform={sheet.matrix}
          fill="none"
          stroke={i < 3 ? "#1a1b1d" : "#25272d"}
          strokeWidth={i < 3 ? 1.3 : 2.2}
          strokeLinejoin="round"
        >
          {sheet.borders?.map((d, j) => <path key={j} d={d} vectorEffect="non-scaling-stroke" />)}
        </g>
      ))}
    </g>
    <path d={boundaries} fill="none" stroke="#1a1a1c" strokeWidth="1.6" />
    <g stroke="#fff" strokeWidth="1.8">
      {meridians.map((x, i) => <line key={x} x1={x} x2={x} y1="0" y2="1346" strokeOpacity={i % 2 ? 0.05 : 0.035} />)}
      {parallels.map((y) => <line key={y} y1={y} y2={y} x1="0" x2="2122" strokeOpacity="0.05" />)}
    </g>
    <g fill="none" stroke="#3f1900" strokeWidth="4.5" filter="url(#glow)">
      <path d="M785 303H632V359H785V591M771 609L690 697V755H732L722 773" />
      <path d="M785 1225V1316H719" strokeOpacity="0.6" />
      <path d="M785 60V303" strokeWidth="1.5" strokeOpacity="0.5" />
    </g>
    <g filter="url(#soft)">
      {labels.map(([text, x, y, size, spacing = 0, opacity = 1], i) => (
        <MapLabel
          key={i}
          transform={`translate(${x} ${y}) scale(${spacing > 1 ? 1 : 0.9} 1)`}
          fontSize={size}
          letterSpacing={spacing}
          opacity={opacity}
        >
          {text}
        </MapLabel>
      ))}
      {cities.map(([x, y], i) => <circle key={i} cx={x} cy={y} r="2.2" fill="#36373a" />)}
      {atolls.map(([x, y], i) => <circle key={i} cx={x} cy={y} r="4" fill="#1a1b1f" />)}
    </g>
    <rect width="2122" height="1346" fill="url(#shade)" />
  </Backdrop>
);

/* ---------- Icons ---------- */

const glyphs = {
  chevronLeft: "M15.41 7.41 14 6l-6 6 6 6 1.41-1.41L10.83 12z",
  login: "M11 7 9.6 8.4l2.6 2.6H2v2h10.2l-2.6 2.6L11 17l5-5-5-5zm9 12h-8v2h8c1.1 0 2-.9 2-2V5c0-1.1-.9-2-2-2h-8v2h8v14z",
  info: "M12 2C6.48 2 2 6.48 2 12s4.48 10 10 10 10-4.48 10-10S17.52 2 12 2zm1 15h-2v-6h2v6zm0-8h-2V7h2v2z",
  send: "M2.01 21 23 12 2.01 3 2 10l15 2-15 2z",
  refresh:
    "M17.65 6.35C16.2 4.9 14.21 4 12 4c-4.42 0-7.99 3.58-7.99 8s3.57 8 7.99 8c3.73 0 6.84-2.55 7.73-6h-2.08c-.82 2.33-3.04 4-5.65 4-3.31 0-6-2.69-6-6s2.69-6 6-6c1.66 0 3.14.69 4.22 1.78L13 11h7V4l-2.35 2.35z",
};

const Svg = styled.svg<{ $size: number }>`
  width: ${(p) => p.$size}px;
  height: ${(p) => p.$size}px;
  flex: none;
  fill: currentColor;
`;

const Icon = ({ name, size = 36.3 }: { name: keyof typeof glyphs; size?: number }) => (
  <Svg $size={size} viewBox="0 0 24 24">
    <path d={glyphs[name]} />
  </Svg>
);

/* ---------- Controls ---------- */

type Variant = "danger" | "info" | "success" | "primary" | "disabled";

const variants: Record<Variant, ReturnType<typeof css>> = {
  danger: css`
    color: #f44336;
    border: 1px solid rgba(244, 67, 54, 0.5);
  `,
  info: css`
    color: #90caf9;
    border: 1px solid rgba(144, 202, 249, 0.5);
  `,
  success: css`
    padding: 0 0 0 6.6px;
    color: rgba(0, 0, 0, 0.87);
    background: #66bb6a;
    box-shadow: 0 5px 2px -3px rgba(0, 0, 0, 0.2), 0 3px 3px rgba(0, 0, 0, 0.14), 0 2px 8px rgba(0, 0, 0, 0.12);
  `,
  primary: css`
    padding: 0 3.3px 0 0;
    color: rgba(0, 0, 0, 0.87);
    background: #90caf9;
  `,
  disabled: css`
    padding: 0 5.4px 0 0;
    color: #676767;
    background: rgba(255, 255, 255, 0.12);
  `,
};

const Button = styled.button<{ $variant: Variant; $small?: boolean; $width: number }>`
  display: inline-flex;
  align-items: center;
  justify-content: center;
  gap: 13.2px;
  width: ${(p) => p.$width}px;
  height: ${(p) => (p.$small ? 51 : 69.3)}px;
  padding: 0 6.6px 0 0;
  border: 0;
  border-radius: 13px;
  background: none;
  font: 400 ${(p) => (p.$small ? 21.4 : 24.75)}px Roboto, "Liberation Sans", sans-serif;
  line-height: 1.75;
  white-space: nowrap;
  ${(p) => variants[p.$variant]}
`;

const ButtonLabel = styled.span<{ $lift?: number }>`
  margin-top: ${(p) => -(p.$lift ?? 0)}px;
`;

/* ---------- Page ---------- */

const Page = styled.main`
  position: relative;
  z-index: 1;
  display: flex;
  flex-direction: column;
  width: 2122px;
  height: 1346px;
  padding: 64.7px 143px 0 81px;
`;

const Header = styled.header`
  display: flex;
  flex-direction: column;
  align-items: center;
`;

const Title = styled.h1`
  margin: 0 0 13px;
  font-size: 79.2px;
  font-weight: 400;
  line-height: 92.4px;
`;

const Intro = styled.p`
  margin: 62px 0 76.6px;
  font-size: 34.55px;
  line-height: 52.8px;
  white-space: nowrap;
`;

const Heading = styled.h2`
  margin: 0;
  font-size: 65.9px;
  font-weight: 400;
  line-height: 77px;
`;

const HeadingRow = styled.div`
  display: flex;
  align-items: center;
  gap: 12px;
  height: 77px;

  ${Svg} {
    margin-top: 11px;
    color: #fff;
  }
`;

const JoinRow = styled.div`
  display: flex;
  align-items: flex-start;
  gap: 26px;
  margin-top: 27.8px;
  height: 91px;

  ${Button} {
    margin-top: 19.8px;
  }
`;

const Field = styled.label`
  width: 347px;
  height: 91px;
  padding: 14px 20px;
  border-radius: 13px 13px 0 0;
  border-bottom: 1.5px solid rgba(255, 255, 255, 0.7);
  background: rgba(255, 255, 255, 0.09);
  color: #b4b4b4;
  font-size: 19.8px;
  line-height: 24px;
`;

const QuickRow = styled.div`
  display: flex;
  align-items: center;
  gap: 13.2px;
  margin: 61px 0 34.3px;
  height: 51px;

  > ${Svg} {
    margin-top: 1px;
    color: #fff;
  }
`;

const Card = styled.section`
  display: flex;
  flex-direction: column;
  align-items: flex-start;
  padding: 34px 33px 33px;
  height: 455px;
  border-radius: 16px;
  background: #2a2a2a;
`;

const Table = styled.div`
  width: 100%;
  margin-bottom: 26px;
`;

const Row = styled.div<{ $head?: boolean }>`
  display: grid;
  grid-template-columns: repeat(5, 1fr);
  align-items: center;
  height: ${(p) => (p.$head ? 94 : 122)}px;
  padding-top: ${(p) => (p.$head ? 2 : 0)}px;
  border-bottom: ${(p) => (p.$head ? "1px solid #515151" : "0")};
  font-size: 23.1px;
`;

const Cell = styled.div<{ $start?: boolean }>`
  padding: 0 26.4px;
  text-align: ${(p) => (p.$start ? "left" : "center")};
  line-height: 34px;
`;

const columns = ["GameId", "Status", "Created by", "Number of Players", "Join the Game"];
const lobbies = [{ id: "45292", status: "SETUP", owner: "Guest_12212", players: 1 }];

export default function App() {
  return (
    <>
      <GlobalStyle />
      <WorldMap />
      <Page>
        <Header>
          <Title>Server List</Title>
          <Button $variant="danger" $width={322}>
            <Icon name="chevronLeft" />
            <ButtonLabel $lift={4}>Back to Dashboard</ButtonLabel>
          </Button>
          <Intro>
            You can either use a code provided by a friend to join a specific lobby or you can choose a lobby from our list
          </Intro>
        </Header>

        <HeadingRow>
          <Heading>Join using a code</Heading>
          <Icon name="info" size={39.6} />
        </HeadingRow>

        <JoinRow>
          <Field>GameId</Field>
          <Button $variant="disabled" $width={237.5} disabled>
            <Icon name="login" />
            <ButtonLabel $lift={2}>Join game!</ButtonLabel>
          </Button>
        </JoinRow>

        <QuickRow>
          <Button $variant="primary" $small $width={160.5}>
            <Icon name="login" size={29.7} />
            <ButtonLabel>Quickjoin</ButtonLabel>
          </Button>
          <Icon name="info" size={39.6} />
        </QuickRow>

        <Card>
          <Heading>Game Lobbies</Heading>
          <Table>
            <Row $head>
              {columns.map((column, i) => (
                <Cell key={column} $start={i === 0}>
                  {column}
                </Cell>
              ))}
            </Row>
            {lobbies.map((lobby) => (
              <Row key={lobby.id}>
                <Cell $start>{lobby.id}</Cell>
                <Cell>{lobby.status}</Cell>
                <Cell>{lobby.owner}</Cell>
                <Cell>{lobby.players}</Cell>
                <Cell>
                  <Button $variant="success" $width={163}>
                    <ButtonLabel>Join</ButtonLabel>
                    <Icon name="send" />
                  </Button>
                </Cell>
              </Row>
            ))}
          </Table>
          <Button $variant="info" $width={205}>
            <Icon name="refresh" />
            <ButtonLabel>Refresh!</ButtonLabel>
          </Button>
        </Card>
      </Page>
    </>
  );
}
